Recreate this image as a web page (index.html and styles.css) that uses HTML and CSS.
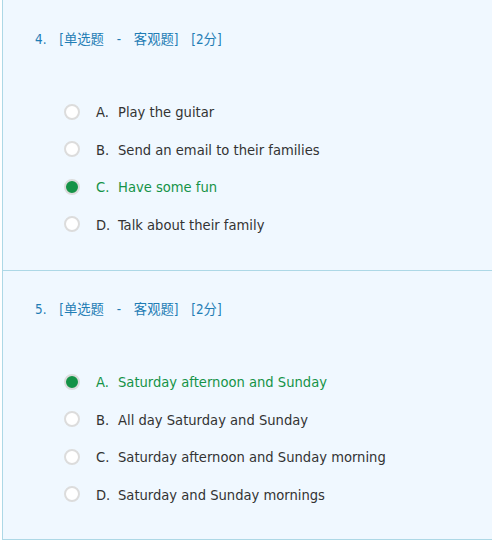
FILE: index.html
```html
<!DOCTYPE html>
<html lang="zh">
<head>
<meta charset="utf-8">
<link rel="stylesheet" href="styles.css">
</head>
<body>
<div class="paper">
  <section class="question">
    <div class="q-title">4. [单选题 - 客观题] [2分]</div>
    <ul class="options">
      <li class="option"><span class="radio"></span><span class="letter">A.</span><span class="text">Play the guitar</span></li>
      <li class="option"><span class="radio"></span><span class="letter">B.</span><span class="text">Send an email to their families</span></li>
      <li class="option checked"><span class="radio"></span><span class="letter">C.</span><span class="text">Have some fun</span></li>
      <li class="option"><span class="radio"></span><span class="letter">D.</span><span class="text">Talk about their family</span></li>
    </ul>
  </section>
  <section class="question">
    <div class="q-title">5. [单选题 - 客观题] [2分]</div>
    <ul class="options">
      <li class="option checked"><span class="radio"></span><span class="letter">A.</span><span class="text">Saturday afternoon and Sunday</span></li>
      <li class="option"><span class="radio"></span><span class="letter">B.</span><span class="text">All day Saturday and Sunday</span></li>
      <li class="option"><span class="radio"></span><span class="letter">C.</span><span class="text">Saturday afternoon and Sunday morning</span></li>
      <li class="option"><span class="radio"></span><span class="letter">D.</span><span class="text">Saturday and Sunday mornings</span></li>
    </ul>
  </section>
</div>
</body>
</html>
```

FILE: styles.css
```css
html, body {
  margin: 0;
  padding: 0;
  background: #ffffff;
}
body {
  padding-left: 2px;
  font-family: "DejaVu Sans Condensed", "DejaVu Sans", "Noto Sans CJK SC", sans-serif;
  font-size: 14.6px;
  color: #333333;
}
.paper {
  width: 520px;
  background: #f0f8ff;
  border: 1px solid #add8e6;
  border-top: none;
}
.question {
  padding: 29px 0 27px 32px;
  border-bottom: 1px solid #add8e6;
}
.question:first-child {
  padding-top: 30px;
}
.question:last-child {
  border-bottom: none;
  padding-bottom: 26px;
}
.q-title {
  font-family: "DejaVu Sans Condensed", "Noto Sans CJK SC", sans-serif;
  font-size: 13.33px;
  line-height: 20px;
  word-spacing: 9px;
  color: #1f7db5;
}
.options {
  list-style: none;
  margin: 43px 0 0 0;
  padding: 0;
}
.option {
  display: flex;
  align-items: center;
  height: 37.5px;
  padding-left: 29px;
}
.radio {
  width: 12px;
  height: 12px;
  border: 2px solid #dcdcdc;
  border-radius: 50%;
  background: #ffffff;
  flex: none;
}
.option.checked .radio {
  background: #159347;
}
.letter {
  margin-left: 16px;
  width: 22px;
}
.option.checked {
  color: #159347;
}
```
